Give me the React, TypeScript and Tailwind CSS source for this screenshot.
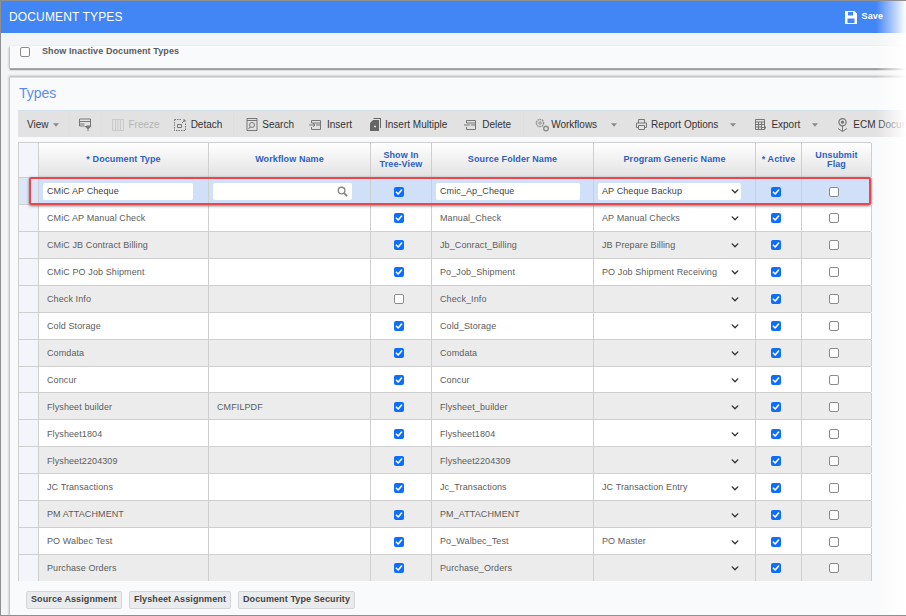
import React from "react";

const Check = ({ on }: { on?: boolean }) =>
  on ? (
    <span className="flex h-[10px] w-[10px] items-center justify-center rounded-[2px] bg-[#0d6efd]">
      <svg viewBox="0 0 10 10" className="h-[10px] w-[10px]" fill="none" stroke="#fff" strokeWidth="1.6" strokeLinecap="round" strokeLinejoin="round">
        <path d="M2.4 5.2 4.2 7 7.6 3" />
      </svg>
    </span>
  ) : (
    <span className="block h-[10px] w-[10px] rounded-[2px] border border-[#8a8a8a] bg-white" />
  );

const Chevron = () => (
  <svg viewBox="0 0 10 6" className="h-[5px] w-[8px]" fill="none" stroke="#333" strokeWidth="1.7" strokeLinecap="round" strokeLinejoin="round">
    <path d="M1.5 1 5 4.6 8.5 1" />
  </svg>
);

const Caret = ({ className = "" }: { className?: string }) => (
  <svg viewBox="0 0 7 4" className={`h-[4px] w-[6px] shrink-0 ${className}`}>
    <path d="M0 0h7L3.5 4z" fill="#8a8a8a" />
  </svg>
);

const ico = { fill: "none", stroke: "#777", strokeWidth: 1 } as const;

const I = {
  filter: (
    <svg viewBox="0 0 13 13" className="h-[13px] w-[13px]" {...ico}>
      <path d="M.5 1h11v7h-4M.5 1v7h5M.5 3.5h11M.5 6h5" />
      <path d="M5.5 8h7l-3 3v2h-1v-2z" fill="#777" stroke="none" />
    </svg>
  ),
  freeze: (
    <svg viewBox="0 0 12 12" className="h-[12px] w-[12px]" fill="none" stroke="#c9c9c9">
      <path d="M.5.5h11v11H.5zM3.5.5v11M6 .5v11M8.5.5v11" />
    </svg>
  ),
  detach: (
    <svg viewBox="0 0 12 12" className="h-[12px] w-[12px]" {...ico}>
      <path d="M.5.5h7M.5.5v11h11v-7" strokeDasharray="1.5 1" />
      <path d="M3.5 5.5h4v3h-4z" />
      <path d="M8 4l3-3M9 1h2v2" />
    </svg>
  ),
  search: (
    <svg viewBox="0 0 12 13" className="h-[13px] w-[12px]" {...ico}>
      <path d="M1 .5h10v12H1z" />
      <path d="M1 2.5h10" />
      <circle cx="6" cy="7" r="2.5" />
      <path d="M4.2 9 2.5 11" />
    </svg>
  ),
  insert: (
    <svg viewBox="0 0 13 12" className="h-[12px] w-[13px]" {...ico}>
      <path d="M2.5 4V1.5h9V10.5h-9V8M2.5 4h9" />
      <path d="M0 6h6M4 4.2 6 6 4 7.8" />
      <path d="M7 6h4" />
    </svg>
  ),
  multi: (
    <svg viewBox="0 0 11 13" className="h-[13px] w-[11px]">
      <path d="M3.5 0H11v10H10V1H3.5zM3 2h6v11H0V5z" fill="#666" />
      <path d="M4 8.5h2M5 7.5v2" stroke="#ddd" />
    </svg>
  ),
  del: (
    <svg viewBox="0 0 13 12" className="h-[12px] w-[13px]" {...ico}>
      <path d="M2.5 4V1.5h9V10.5h-9V8M2.5 4h9" />
      <path d="M0 6h6M7 6h4" />
    </svg>
  ),
  gears: (
    <svg viewBox="0 0 15 14" className="h-[14px] w-[15px]" fill="none" stroke="#8c8c8c">
      <circle cx="5" cy="5" r="3.6" strokeDasharray="1.6 .7" strokeWidth="1.4" />
      <circle cx="5" cy="5" r="1.2" />
      <circle cx="11" cy="10.5" r="2.3" strokeWidth="1.4" />
    </svg>
  ),
  print: (
    <svg viewBox="0 0 11 11" className="h-[11px] w-[11px]" {...ico}>
      <path d="M2.5 4V.5h6V4M.5 4h10v4.5h-2M.5 4v4.5h2M2.5 6.5h6v4h-6z" />
    </svg>
  ),
  grid: (
    <svg viewBox="0 0 11 11" className="h-[11px] w-[11px]" {...ico}>
      <path d="M.5.5h9v10h-9zM.5 3h9M.5 5.5h9M.5 8h6M3.5 3v7.5M6.5 3v7.5" />
      <path d="M7 8.5h4M9.5 7l1.5 1.5L9.5 10" />
    </svg>
  ),
  ecm: (
    <svg viewBox="0 0 11 14" className="h-[14px] w-[11px]" {...ico}>
      <circle cx="5.5" cy="4.2" r="3.6" strokeWidth="1.2" />
      <circle cx="5.5" cy="4.2" r="1.2" fill="#777" />
      <path d="M5.5 8v5.5M1 10.5l4.5 3 4.5-3" />
    </svg>
  ),
};

type Row = { d: string; w?: string; t: boolean; s: string; p?: string };
const rows: Row[] = [
  { d: "CMiC AP Manual Check", t: true, s: "Manual_Check", p: "AP Manual Checks" },
  { d: "CMiC JB Contract Billing", t: true, s: "Jb_Conract_Billing", p: "JB Prepare Billing" },
  { d: "CMiC PO Job Shipment", t: true, s: "Po_Job_Shipment", p: "PO Job Shipment Receiving" },
  { d: "Check Info", t: false, s: "Check_Info" },
  { d: "Cold Storage", t: true, s: "Cold_Storage" },
  { d: "Comdata", t: true, s: "Comdata" },
  { d: "Concur", t: true, s: "Concur" },
  { d: "Flysheet builder", w: "CMFILPDF", t: true, s: "Flysheet_builder" },
  { d: "Flysheet1804", t: true, s: "Flysheet1804" },
  { d: "Flysheet2204309", t: true, s: "Flysheet2204309" },
  { d: "JC Transactions", t: true, s: "Jc_Transactions", p: "JC Transaction Entry" },
  { d: "PM ATTACHMENT", t: true, s: "PM_ATTACHMENT" },
  { d: "PO Walbec Test", t: true, s: "Po_Walbec_Test", p: "PO Master" },
  { d: "Purchase Orders", t: true, s: "Purchase_Orders" },
];

const cols = "grid grid-cols-[20px_170px_162px_61px_162px_162px_46px_70px]";
const cell = "flex items-center border-r border-[#cfcfcf] min-w-0";
const textCell = `${cell} pl-[8px] pt-[2px]`;
const checkCell = `${cell} justify-center pr-[5px] pt-[1px]`;
const inputCell = `${cell} pl-[4px] pt-[1px]`;
const inputCls = "flex h-[17px] items-center rounded-[2px] bg-white px-[4px] text-[#444]";

const Tool = ({ icon, label, dim, className = "" }: { icon: React.ReactNode; label: string; dim?: boolean; className?: string }) => (
  <span className={`flex shrink-0 items-center ${className}`}>
    {icon}
    <span className={dim ? "text-[#b5b5b5]" : "text-[#333]"}>{label}</span>
  </span>
);

const Sep = ({ className = "" }: { className?: string }) => <span className={`h-[26px] w-px shrink-0 bg-[#d7dfe8] ${className}`} />;

const Head = ({ children }: { children: React.ReactNode }) => (
  <div className="flex items-center justify-center border-r border-[#cfcfcf] text-center font-bold leading-[9.5px] text-[#2f5fc4]">{children}</div>
);

const Btn = ({ children }: { children: React.ReactNode }) => (
  <button className="flex h-[18px] items-center rounded-[2px] border border-[#d4d6d9] bg-[#e9ebed] px-[4px] font-bold text-[#444]">{children}</button>
);

export default function App() {
  return (
    <div className="relative flex h-[616px] w-[906px] flex-col overflow-hidden border-y border-l border-[#8f8f8f] bg-[#f3f4f5] text-[9px] tracking-[0.1px] text-[#5c5c5c] [font-family:'Liberation_Sans',Arial,sans-serif]">
      <header className="flex h-[32px] shrink-0 items-center justify-between bg-[#4285f4] pl-[8px] pr-[23px] text-white">
        <span className="text-[12px] tracking-[0.15px]">DOCUMENT TYPES</span>
        <span className="flex items-center gap-[5px] font-bold">
          <svg viewBox="0 0 12 13" className="h-[13px] w-[12px]">
            <path fillRule="evenodd" d="M0 0h9.5L12 2.5V13H0zM3 1v3.5h5V1zM2.5 7.5V12h7V7.5z" fill="#fff" />
          </svg>
          Save
        </span>
      </header>

      <section className="mr-[-10px] ml-[9px] mt-[13px] flex h-[22px] shrink-0 items-start bg-[#f9fafb] pl-[10px] shadow-[-1px_1px_2px_#b5b5b5,0_2px_1px_#8f8f8f]">
        <span className="mt-[-1px] flex items-center gap-[12px] font-bold">
          <span className="block h-[10px] w-[10px] rounded-[2px] border border-[#8a8a8a] bg-white" />
          Show Inactive Document Types
        </span>
      </section>

      <section className="mr-[-10px] ml-[9px] mt-[9px] min-h-0 flex-1 border-t border-[#dcdcdc] bg-[#f9fafb] pl-[8px] shadow-[0_0_2px_1px_#b0b0b0]">
        <h2 className="ml-[1px] h-[32px] pt-[7px] text-[14px] leading-[17px] tracking-normal text-[#5b8def]">Types</h2>

        <div className="flex h-[27px] items-center overflow-hidden border-t border-[#d5e1ef] bg-[#e2e2e2] pl-[9px] pt-[1px] text-[10px] tracking-normal">
          <Tool label="View" icon={null} />
          <Caret className="ml-[4px]" />
          <Sep className="ml-[10px]" />
          <span className="ml-[9px]">{I.filter}</span>
          <Sep className="ml-[9px]" />
          <Tool icon={I.freeze} label="Freeze" dim className="ml-[10px] gap-[5px]" />
          <Tool icon={I.detach} label="Detach" className="ml-[14px] gap-[5px]" />
          <Sep className="ml-[11px]" />
          <Tool icon={I.search} label="Search" className="ml-[12px] gap-[4px]" />
          <Tool icon={I.insert} label="Insert" className="ml-[15px] gap-[5px]" />
          <Tool icon={I.multi} label="Insert Multiple" className="ml-[18px] gap-[4px]" />
          <Tool icon={I.del} label="Delete" className="ml-[17px] gap-[5px]" />
          <Sep className="ml-[12px]" />
          <Tool icon={I.gears} label="Workflows" className="ml-[11px] gap-[1px]" />
          <Caret className="ml-[14px]" />
          <Tool icon={I.print} label="Report Options" className="ml-[19px] gap-[4px]" />
          <Caret className="ml-[12px]" />
          <Tool icon={I.grid} label="Export" className="ml-[19px] gap-[5px]" />
          <Caret className="ml-[12px]" />
          <Tool icon={I.ecm} label="ECM Documents" className="ml-[19px] gap-[5px]" />
        </div>

        <div className="relative mt-[5px] w-[853px] border-l border-t border-[#cfcfcf]">
          <div className={`${cols} h-[34px] bg-gradient-to-b from-white to-[#e2e2e2]`}>
            <div className="border-r border-[#cfcfcf] bg-[#f3f5fa]" />
            <Head>* Document Type</Head>
            <Head>Workflow Name</Head>
            <Head>Show In<br />Tree-View</Head>
            <Head>Source Folder Name</Head>
            <Head>Program Generic Name</Head>
            <Head>* Active</Head>
            <Head>Unsubmit<br />Flag</Head>
          </div>

          <div className={`${cols} h-[27px] border-t border-[#cfcfcf] bg-[#cfe0f8]`}>
            <div className="border-r border-[#cfcfcf] bg-[#dbe7f9]" />
            <div className={inputCell}><span className={`${inputCls} w-[150px]`}>CMiC AP Cheque</span></div>
            <div className={inputCell}>
              <span className={`${inputCls} w-[139px] justify-end`}>
                <svg viewBox="0 0 12 12" className="h-[11px] w-[11px]" fill="none" stroke="#888" strokeWidth="1.5">
                  <circle cx="5" cy="5" r="3.6" />
                  <path d="M7.8 7.8 11 11" strokeWidth="2" />
                </svg>
              </span>
            </div>
            <div className={checkCell}><Check on /></div>
            <div className={inputCell}><span className={`${inputCls} w-[144px]`}>Cmic_Ap_Cheque</span></div>
            <div className={inputCell}>
              <span className={`${inputCls} w-[143px] justify-between pr-[2px]`}>AP Cheque Backup<Chevron /></span>
            </div>
            <div className={checkCell}><Check on /></div>
            <div className={checkCell}><Check /></div>
          </div>

          {rows.map((r, i) => (
            <div key={r.d} className={`${cols} h-[26.93px] border-t border-[#cfcfcf] ${i % 2 ? "bg-[#ececec]" : "bg-white"}`}>
              <div className="border-r border-[#cfcfcf] bg-[#f3f5fa]" />
              <div className={textCell}>{r.d}</div>
              <div className={textCell}>{r.w}</div>
              <div className={checkCell}><Check on={r.t} /></div>
              <div className={textCell}>{r.s}</div>
              <div className={`${textCell} justify-between pr-[16px]`}><span>{r.p}</span><Chevron /></div>
              <div className={checkCell}><Check on /></div>
              <div className={checkCell}><Check /></div>
            </div>
          ))}

          <div className="pointer-events-none absolute left-[10px] top-[34px] h-[28px] w-[842px] rounded-[2px] border-[2px] border-[#e8474c] shadow-[0_1px_3px_#777]" />
        </div>

        <div className="ml-[8px] mt-[10px] flex gap-[7px]">
          <Btn>Source Assignment</Btn>
          <Btn>Flysheet Assignment</Btn>
          <Btn>Document Type Security</Btn>
        </div>
      </section>

      <div className="pointer-events-none absolute inset-y-0 right-0 w-[30px] bg-gradient-to-r from-transparent to-white" />
    </div>
  );
}
